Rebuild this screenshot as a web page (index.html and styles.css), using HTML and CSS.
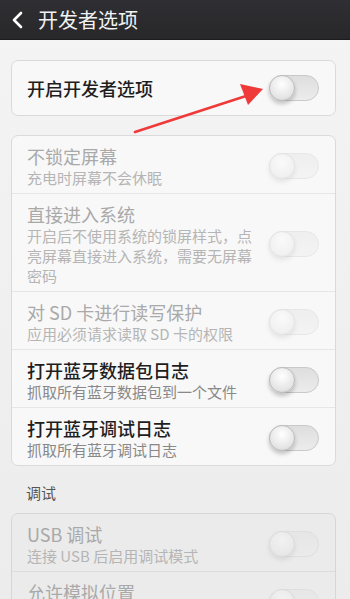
FILE: index.html
```html
<!DOCTYPE html>
<html lang="zh">
<head>
<meta charset="utf-8">
<link rel="stylesheet" href="styles.css">
</head>
<body>
<div class="screen">
  <header class="bar">
    <svg class="back" width="14" height="20" viewBox="0 0 14 20"><path d="M10 3 L3 10 L10 17" fill="none" stroke="#fff" stroke-width="2.6" stroke-linecap="round" stroke-linejoin="round"/></svg>
    <span class="bar-title">开发者选项</span>
  </header>
  <main class="content">
    <section class="card card-main">
      <div class="row single">
        <div class="texts"><div class="title on">开启开发者选项</div></div>
        <span class="toggle"></span>
      </div>
    </section>

    <section class="card">
      <div class="row">
        <div class="texts"><div class="title off">不锁定屏幕</div><div class="sub off">充电时屏幕不会休眠</div></div>
        <span class="toggle dis"></span>
      </div>
      <div class="row">
        <div class="texts"><div class="title off">直接进入系统</div><div class="sub off">开启后不使用系统的锁屏样式，点亮屏幕直接进入系统，需要无屏幕密码</div></div>
        <span class="toggle dis"></span>
      </div>
      <div class="row">
        <div class="texts"><div class="title off">对 SD 卡进行读写保护</div><div class="sub off">应用必须请求读取 SD 卡的权限</div></div>
        <span class="toggle dis"></span>
      </div>
      <div class="row">
        <div class="texts"><div class="title on">打开蓝牙数据包日志</div><div class="sub">抓取所有蓝牙数据包到一个文件</div></div>
        <span class="toggle"></span>
      </div>
      <div class="row">
        <div class="texts"><div class="title on">打开蓝牙调试日志</div><div class="sub">抓取所有蓝牙调试日志</div></div>
        <span class="toggle"></span>
      </div>
    </section>

    <div class="section-label">调试</div>

    <section class="card card-grey">
      <div class="row">
        <div class="texts"><div class="title off">USB 调试</div><div class="sub off">连接 USB 后启用调试模式</div></div>
        <span class="toggle dis"></span>
      </div>
      <div class="row">
        <div class="texts"><div class="title off">允许模拟位置</div><div class="sub off">允许模拟位置</div></div>
        <span class="toggle dis"></span>
      </div>
    </section>
  </main>
  <svg class="arrow" width="350" height="150" viewBox="0 0 350 150">
    <path d="M135 132 L246 96" stroke="#f03a3a" stroke-width="2.6" fill="none" stroke-linecap="round"/>
    <path d="M263 89 L240 84 L248 105 Z" fill="#f03a3a"/>
  </svg>
</div>
</body>
</html>
```

FILE: styles.css
```css
html, body {
  margin: 0;
  padding: 0;
}
body {
  width: 350px;
  height: 599px;
  overflow: hidden;
  font-family: "Noto Sans CJK SC", "Noto Sans", sans-serif;
  background: linear-gradient(#f4f4f4, #ececec);
}
.screen {
  position: relative;
  height: 599px;
  overflow: hidden;
}
.bar {
  height: 39px;
  background: linear-gradient(#2f2f33, #28282b);
  display: flex;
  align-items: center;
  padding-left: 11px;
  border-bottom: 1px solid #1c1c1e;
}
.back {
  display: block;
  margin-right: 13px;
}
.bar-title {
  color: #f2f2f2;
  font-size: 20px;
  line-height: 24px;
}
.content {
  display: flex;
  flex-direction: column;
  padding: 20px 14px 0 11px;
}
.card {
  background: #f8f8f8;
  border: 1px solid #dadada;
  border-radius: 7px;
  margin-bottom: 19px;
  overflow: hidden;
}
.card-grey {
  background: #ebebeb;
  border-color: #d6d6d6;
}
.row {
  display: flex;
  align-items: center;
  padding: 8px 15px 5px 15px;
  border-top: 1px solid #e6e6e6;
}
.row:first-child {
  border-top: none;
}
.card-grey .row {
  border-top-color: #dcdcdc;
}
.row.single {
  height: 54px;
  padding: 0 15px;
  box-sizing: border-box;
}
.texts {
  flex: 1;
  min-width: 0;
  padding-right: 4px;
}
.title {
  font-size: 18px;
  line-height: 24px;
  color: #1e1e1e;
}
.title.on {
  font-weight: 500;
}
.title.off {
  color: #a9a9a9;
}
.sub {
  font-size: 15px;
  line-height: 20px;
  color: #888;
}
.sub.off {
  color: #b5b5b5;
}
.section-label {
  font-size: 15px;
  line-height: 20px;
  color: #555;
  padding-left: 15px;
  margin: -2px 0 10px;
}
.toggle {
  position: relative;
  flex: none;
  width: 50px;
  height: 26px;
  border-radius: 13px;
  background: linear-gradient(#dedede, #ececec);
  border: 1px solid #c9c9c9;
  box-sizing: border-box;
  margin-right: 1px;
}
.toggle::after {
  content: "";
  position: absolute;
  left: -1px;
  top: -1px;
  width: 26px;
  height: 26px;
  border-radius: 50%;
  background: radial-gradient(circle at 50% 35%, #ffffff, #e4e4e4 70%, #d0d0d0);
  border: 1px solid #bdbdbd;
  box-sizing: border-box;
  box-shadow: 0 3px 4px rgba(0,0,0,0.22);
}
.toggle.dis {
  opacity: 0.35;
}
.arrow {
  position: absolute;
  left: 0;
  top: 0;
  pointer-events: none;
}
```
